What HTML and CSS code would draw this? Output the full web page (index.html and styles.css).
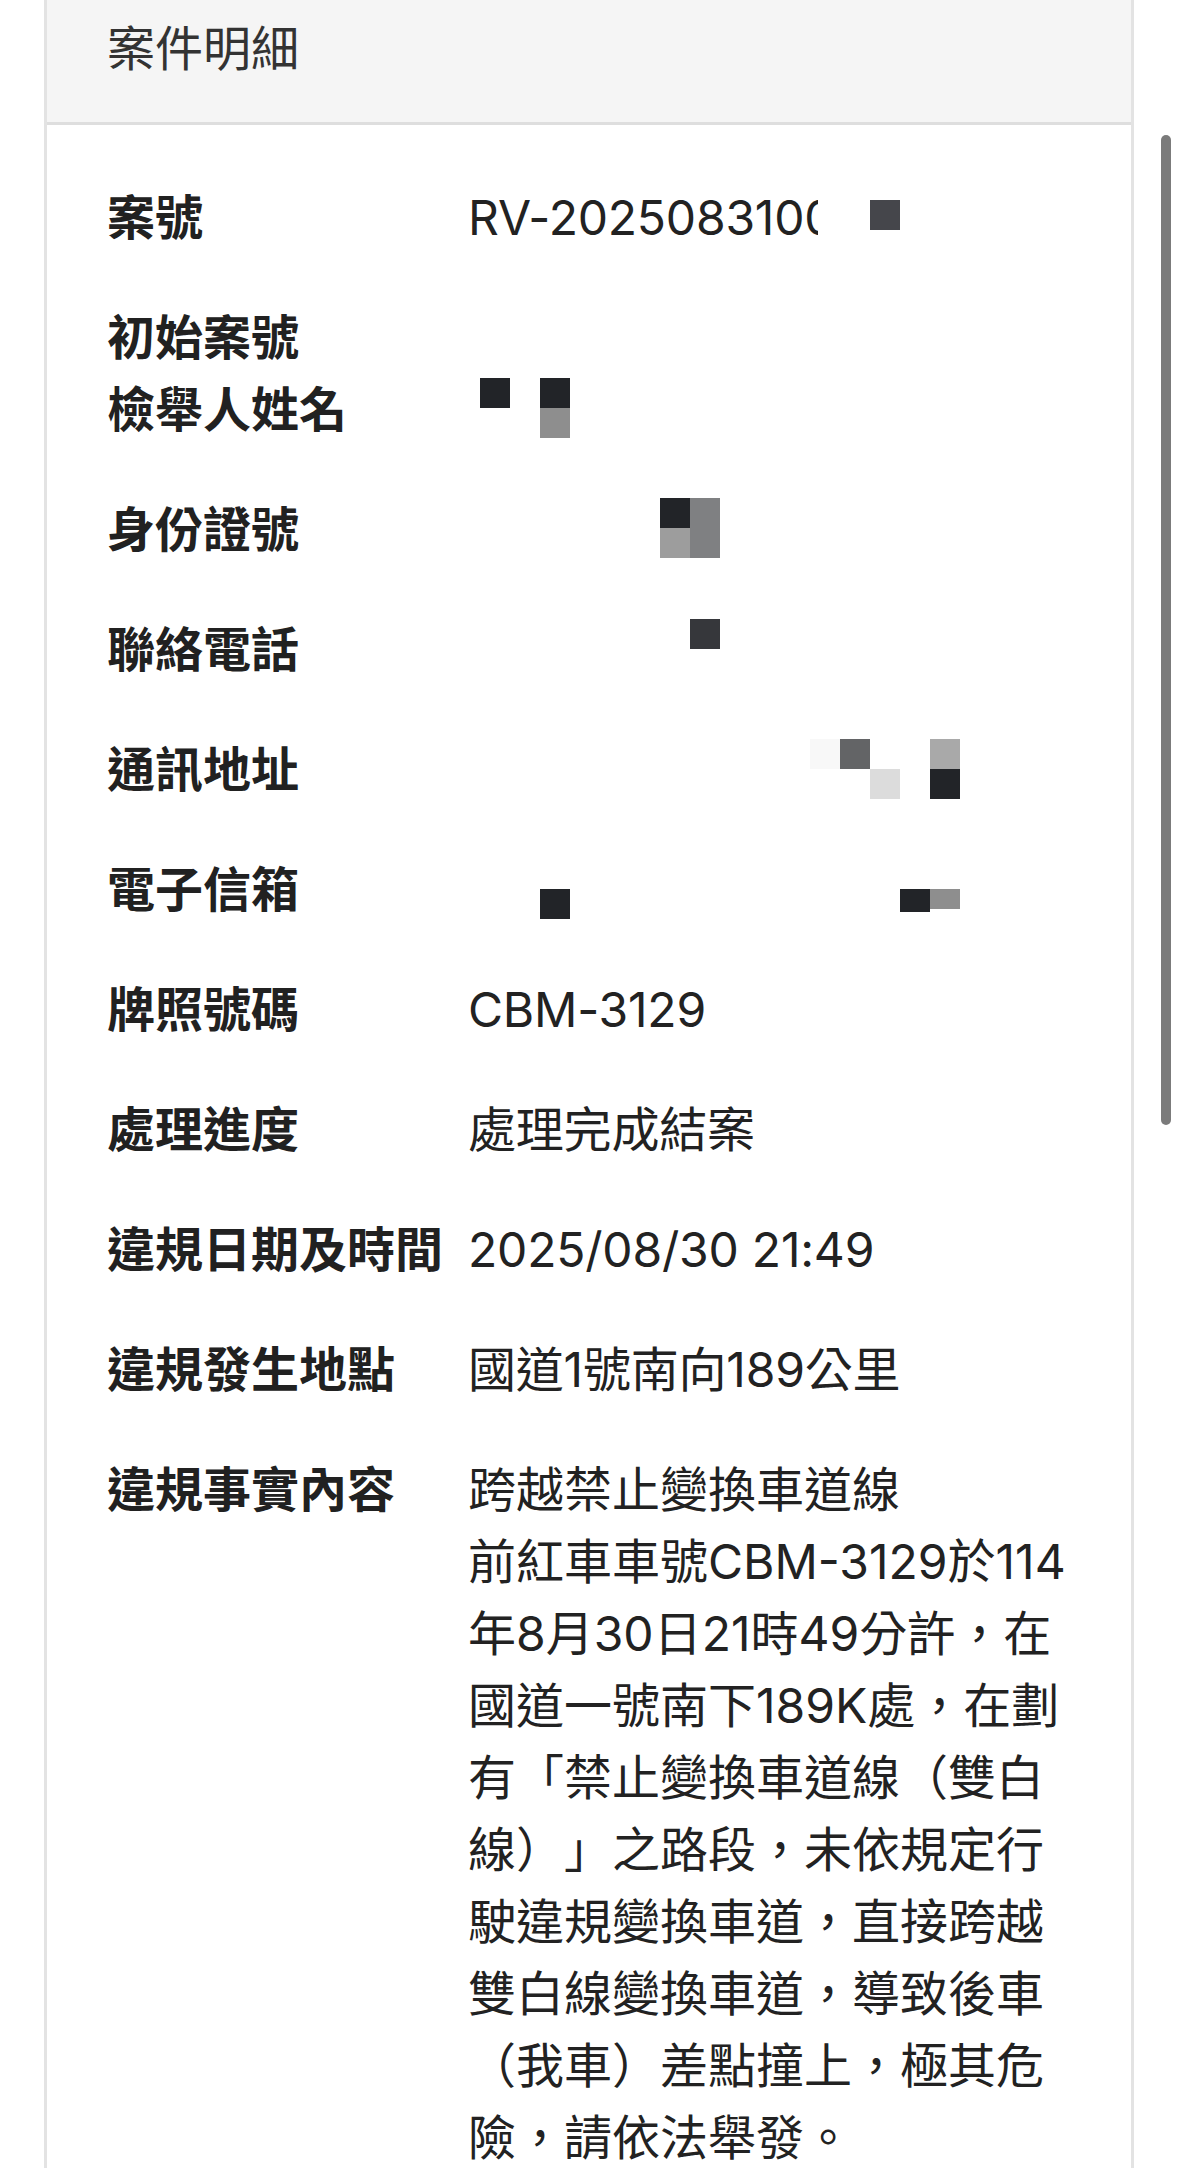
FILE: index.html
```html
<!DOCTYPE html>
<html lang="zh-Hant">
<head>
    <meta charset="UTF-8">
    <meta name="viewport" content="width=device-width, initial-scale=1.0">
    <title>案件明細</title>
    <link rel="stylesheet" href="styles.css">
</head>
<body>
    <div class="page">
        <div class="card">
            <div class="card-header">案件明細</div>
            <div class="card-body">
                <div class="row">
                    <div class="label">案號</div>
                    <div class="value">
                        <span class="cut">RV-2025083100</span>
                        <div class="mosaic m-case"><i class="c45"></i></div>
                    </div>
                </div>
                <div class="row no-bottom">
                    <div class="label">初始案號</div>
                    <div class="value"></div>
                </div>
                <div class="row no-top">
                    <div class="label">檢舉人姓名</div>
                    <div class="value">
                        <div class="mosaic m-name">
                            <i class="c22"></i><i></i><i class="c22"></i>
                            <i></i><i></i><i class="c8e"></i>
                        </div>
                    </div>
                </div>
                <div class="row">
                    <div class="label">身份證號</div>
                    <div class="value">
                        <div class="mosaic m-id">
                            <i class="c22"></i><i class="c7f"></i>
                            <i class="c9d"></i><i class="c7f"></i>
                        </div>
                    </div>
                </div>
                <div class="row">
                    <div class="label">聯絡電話</div>
                    <div class="value">
                        <div class="mosaic m-tel"><i class="c36"></i></div>
                    </div>
                </div>
                <div class="row">
                    <div class="label">通訊地址</div>
                    <div class="value">
                        <div class="mosaic m-addr">
                            <i class="cf8"></i><i class="c63"></i><i></i><i></i><i class="ca9"></i>
                            <i></i><i></i><i class="cdc"></i><i></i><i class="c22"></i>
                        </div>
                    </div>
                </div>
                <div class="row">
                    <div class="label">電子信箱</div>
                    <div class="value">
                        <div class="mosaic m-mail-a"><i class="c22"></i></div>
                        <div class="mosaic m-mail-b"><i class="c22 short"></i><i class="c8e shorter"></i></div>
                    </div>
                </div>
                <div class="row">
                    <div class="label">牌照號碼</div>
                    <div class="value">CBM-3129</div>
                </div>
                <div class="row">
                    <div class="label">處理進度</div>
                    <div class="value">處理完成結案</div>
                </div>
                <div class="row">
                    <div class="label">違規日期及時間</div>
                    <div class="value">2025/08/30 21:49</div>
                </div>
                <div class="row">
                    <div class="label">違規發生地點</div>
                    <div class="value">國道1號南向189公里</div>
                </div>
                <div class="row">
                    <div class="label">違規事實內容</div>
                    <div class="value text">跨越禁止變換車道線<br>前紅車車號CBM-3129於114<br>年8月30日21時49分許，在<br>國道一號南下189K處，在劃<br>有「禁止變換車道線（雙白<br>線）」之路段，未依規定行<br>駛違規變換車道，直接跨越<br>雙白線變換車道，導致後車<br>（我車）差點撞上，極其危<br>險，請依法舉發。</div>
                </div>
            </div>
        </div>
    </div>
    <div class="scroll-thumb"></div>
</body>
</html>
```

FILE: styles.css
```css
* {
    box-sizing: border-box;
}
body {
    margin: 0;
    background: #fff;
    color: #222;
    font-family: "Inter", "Noto Sans CJK TC", sans-serif;
    text-spacing-trim: space-all;
}
.page {
    padding: 0 45px 0 44px;
}
.card {
    border: 3px solid #e3e3e3;
    border-top: 0;
}
.card-header {
    background: #f5f5f5;
    border-bottom: 3px solid #dedede;
    padding: 20px 60px 44px;
    font-size: 48px;
    line-height: 58px;
    color: #333;
}
.card-body {
    padding: 33px 60px 0 60px;
}
.row {
    display: flex;
    padding: 24px 0;
    font-size: 48px;
    line-height: 72px;
}
.row.no-bottom { padding-bottom: 0; }
.row.no-top { padding-top: 0; }
.label {
    width: 361px;
    flex: none;
    font-weight: 700;
    color: #212121;
}
.value {
    position: relative;
    flex: 1;
    min-height: 72px;
    letter-spacing: -0.2px;
}
.value.text {
    white-space: nowrap;
    letter-spacing: 0;
}
.cut {
    display: inline-block;
    width: 350px;
    overflow: hidden;
    white-space: nowrap;
    vertical-align: top;
}

/* pixelated redaction blocks */
.mosaic {
    position: absolute;
    display: grid;
    grid-auto-rows: 30px;
}
.mosaic i {
    display: block;
    width: 30px;
    height: 30px;
}
.mosaic i.short { height: 23px; }
.mosaic i.shorter { height: 20px; }
.m-case { left: 402px; top: 18px; grid-template-columns: 30px; }
.m-name { left: 12px; top: 4px; grid-template-columns: repeat(3, 30px); }
.m-id { left: 192px; top: 4px; grid-template-columns: repeat(2, 30px); }
.m-tel { left: 222px; top: 5px; grid-template-columns: 30px; }
.m-addr { left: 342px; top: 5px; grid-template-columns: repeat(5, 30px); }
.m-mail-a { left: 72px; top: 35px; grid-template-columns: 30px; }
.m-mail-b { left: 432px; top: 35px; grid-template-columns: repeat(2, 30px); }
.c22 { background: #222428; }
.c36 { background: #36373b; }
.c45 { background: #45464b; }
.c63 { background: #636466; }
.c7f { background: #7f8082; }
.c8e { background: #8e8e8e; }
.c9d { background: #9d9d9d; }
.ca9 { background: #a9a9a9; }
.cdc { background: #dcdcdc; }
.cf8 { background: #f8f8f8; }

.scroll-thumb {
    position: fixed;
    top: 135px;
    left: 1161px;
    width: 10px;
    height: 990px;
    border-radius: 5px;
    background: #7b7b7b;
}
```
